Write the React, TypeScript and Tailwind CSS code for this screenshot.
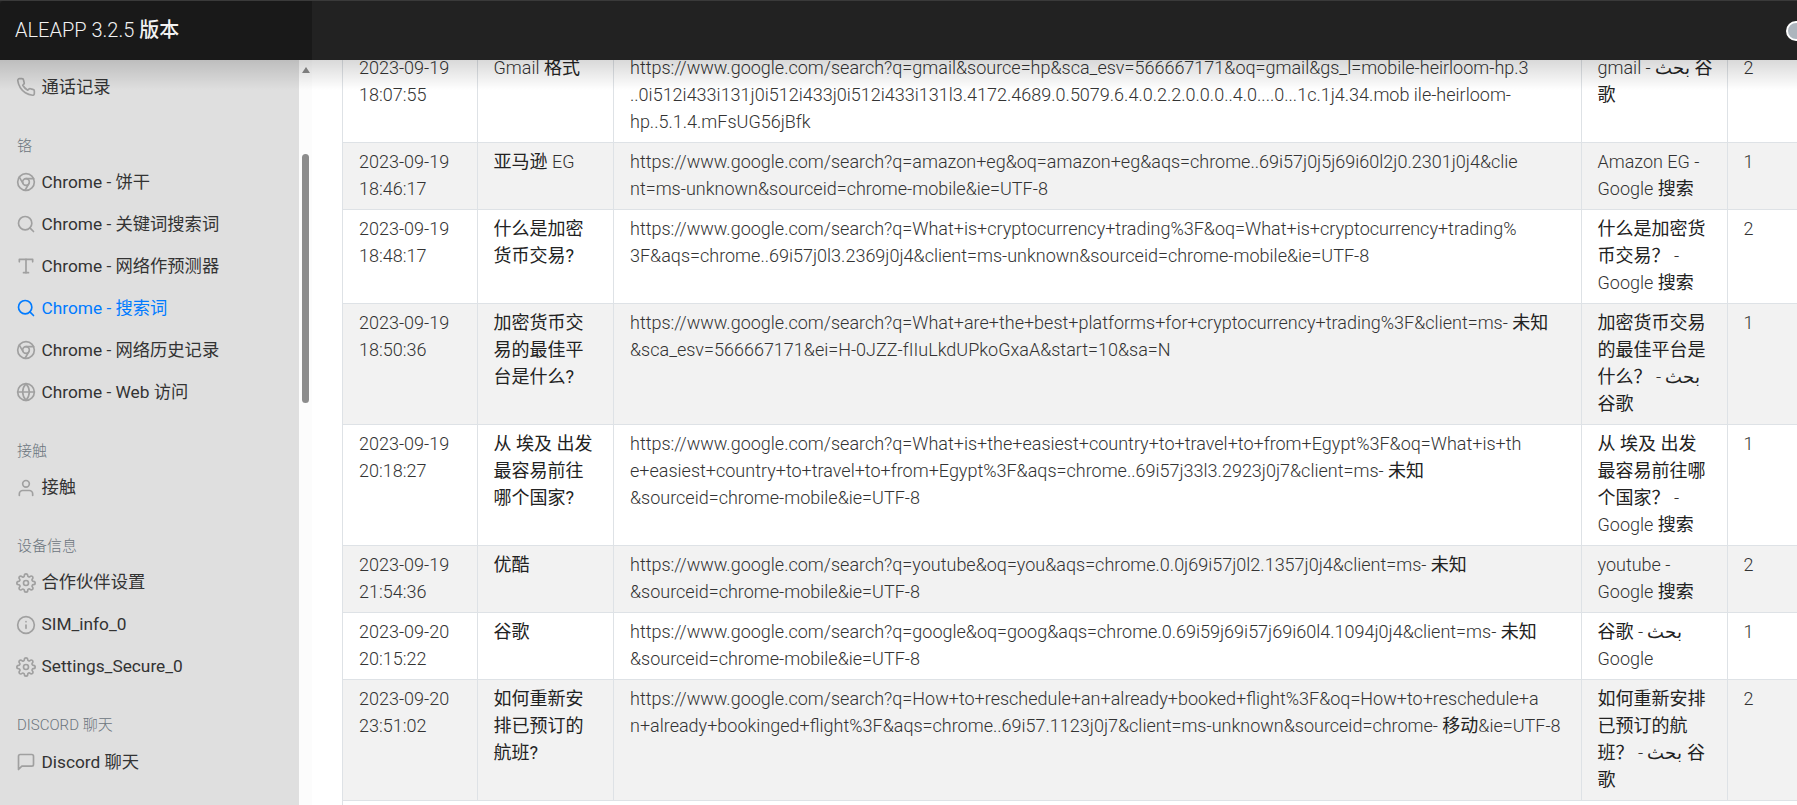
import type { ComponentType } from 'react';
import { FiChrome, FiGlobe, FiInfo, FiMessageSquare, FiPhone, FiSearch, FiSettings, FiType, FiUser } from 'react-icons/fi';

type NavItem = { label: string; icon: ComponentType<{ size?: number; className?: string }>; active?: boolean };
type NavGroup = { title?: string; items: NavItem[] };

const groups: NavGroup[] = [
  { items: [{ label: '通话记录', icon: FiPhone }] },
  {
    title: '铬',
    items: [
      { label: 'Chrome - 饼干', icon: FiChrome },
      { label: 'Chrome - 关键词搜索词', icon: FiSearch },
      { label: 'Chrome - 网络作预测器', icon: FiType },
      { label: 'Chrome - 搜索词', icon: FiSearch, active: true },
      { label: 'Chrome - 网络历史记录', icon: FiChrome },
      { label: 'Chrome - Web 访问', icon: FiGlobe },
    ],
  },
  { title: '接触', items: [{ label: '接触', icon: FiUser }] },
  {
    title: '设备信息',
    items: [
      { label: '合作伙伴设置', icon: FiSettings },
      { label: 'SIM_info_0', icon: FiInfo },
      { label: 'Settings_Secure_0', icon: FiSettings },
    ],
  },
  { title: 'DISCORD 聊天', items: [{ label: 'Discord 聊天', icon: FiMessageSquare }] },
];

const rows = [
  {
    time: ['2023-09-19', '18:07:55'],
    title: ['Gmail 格式'],
    url: [
      'https://www.google.com/search?q=gmail&source=hp&sca_esv=566667171&oq=gmail&gs_l=mobile-heirloom-hp.3',
      '..0i512i433i131j0i512i433j0i512i433i131l3.4172.4689.0.5079.6.4.0.2.2.0.0.0..4.0....0...1c.1j4.34.mob ile-heirloom-',
      'hp..5.1.4.mFsUG56jBfk',
    ],
    page: ['gmail - بحث 谷', '歌'],
    count: 2,
  },
  {
    time: ['2023-09-19', '18:46:17'],
    title: ['亚马逊 EG'],
    url: [
      'https://www.google.com/search?q=amazon+eg&oq=amazon+eg&aqs=chrome..69i57j0j5j69i60l2j0.2301j0j4&clie',
      'nt=ms-unknown&sourceid=chrome-mobile&ie=UTF-8',
    ],
    page: ['Amazon EG -', 'Google 搜索'],
    count: 1,
  },
  {
    time: ['2023-09-19', '18:48:17'],
    title: ['什么是加密', '货币交易?'],
    url: [
      'https://www.google.com/search?q=What+is+cryptocurrency+trading%3F&oq=What+is+cryptocurrency+trading%',
      '3F&aqs=chrome..69i57j0l3.2369j0j4&client=ms-unknown&sourceid=chrome-mobile&ie=UTF-8',
    ],
    page: ['什么是加密货', '币交易？ -', 'Google 搜索'],
    count: 2,
  },
  {
    time: ['2023-09-19', '18:50:36'],
    title: ['加密货币交', '易的最佳平', '台是什么?'],
    url: [
      'https://www.google.com/search?q=What+are+the+best+platforms+for+cryptocurrency+trading%3F&client=ms- 未知',
      '&sca_esv=566667171&ei=H-0JZZ-fIIuLkdUPkoGxaA&start=10&sa=N',
    ],
    page: ['加密货币交易', '的最佳平台是', '什么？ - بحث', '谷歌'],
    count: 1,
  },
  {
    time: ['2023-09-19', '20:18:27'],
    title: ['从 埃及 出发', '最容易前往', '哪个国家?'],
    url: [
      'https://www.google.com/search?q=What+is+the+easiest+country+to+travel+to+from+Egypt%3F&oq=What+is+th',
      'e+easiest+country+to+travel+to+from+Egypt%3F&aqs=chrome..69i57j33l3.2923j0j7&client=ms- 未知',
      '&sourceid=chrome-mobile&ie=UTF-8',
    ],
    page: ['从 埃及 出发', '最容易前往哪', '个国家？ -', 'Google 搜索'],
    count: 1,
  },
  {
    time: ['2023-09-19', '21:54:36'],
    title: ['优酷'],
    url: [
      'https://www.google.com/search?q=youtube&oq=you&aqs=chrome.0.0j69i57j0l2.1357j0j4&client=ms- 未知',
      '&sourceid=chrome-mobile&ie=UTF-8',
    ],
    page: ['youtube -', 'Google 搜索'],
    count: 2,
  },
  {
    time: ['2023-09-20', '20:15:22'],
    title: ['谷歌'],
    url: [
      'https://www.google.com/search?q=google&oq=goog&aqs=chrome.0.69i59j69i57j69i60l4.1094j0j4&client=ms- 未知',
      '&sourceid=chrome-mobile&ie=UTF-8',
    ],
    page: ['谷歌 - بحث', 'Google'],
    count: 1,
  },
  {
    time: ['2023-09-20', '23:51:02'],
    title: ['如何重新安', '排已预订的', '航班?'],
    url: [
      'https://www.google.com/search?q=How+to+reschedule+an+already+booked+flight%3F&oq=How+to+reschedule+a',
      'n+already+bookinged+flight%3F&aqs=chrome..69i57.1123j0j7&client=ms-unknown&sourceid=chrome- 移动&ie=UTF-8',
    ],
    page: ['如何重新安排', '已预订的航', '班？ - بحث 谷', '歌'],
    count: 2,
  },
];

// CJK and Arabic runs come out darker than the Roboto Light around them
function Mixed({ text }: { text: string }) {
  const parts = text.split(/([\u0600-\u06ff\u4e00-\u9fff？]+(?:\s[\u0600-\u06ff\u4e00-\u9fff？]+)*\??)/);
  return (
    <>
      {parts.map((part, i) =>
        i % 2 === 1 ? (
          <span key={i} className="font-normal text-[#222]">
            {part}
          </span>
        ) : (
          part
        ),
      )}
    </>
  );
}

// fixed line height: mixed fonts on one line would otherwise grow the row
function Lines({ lines }: { lines: string[] }) {
  return (
    <>
      {lines.map((line, i) => (
        <div key={i} className="h-[27px] whitespace-nowrap">
          <Mixed text={line} />
        </div>
      ))}
    </>
  );
}

function Sidebar() {
  return (
    <aside className="flex w-[312px] shrink-0 overflow-hidden">
      <nav className="w-[299px] shrink-0 bg-[#dfdfdf] pl-[16px] pt-[6px]">
        {groups.map((group, i) => (
          <div key={i} className={group.title ? 'mt-[22.75px]' : ''}>
            {group.title && <div className="ml-[1px] flex h-[30.5px] items-center text-[15px] font-light text-[#6c757d]">{group.title}</div>}
            {group.items.map((item) => {
              const Icon = item.icon;
              return (
                <div
                  key={item.label}
                  className={`flex h-[42px] items-center gap-[5.5px] text-[17.3px] ${item.active ? 'text-[#007bff]' : 'text-[#333]'}`}
                >
                  <Icon size={20} className={item.active ? 'text-[#007bff]' : 'text-[#a0a0a0]'} />
                  <span>{item.label}</span>
                </div>
              );
            })}
          </div>
        ))}
      </nav>
      {/* scrollbar */}
      <div className="flex w-[13px] flex-col items-center bg-[#fcfcfc] pt-[7px]">
        <div className="h-0 w-0 border-x-[4.5px] border-b-[6px] border-x-transparent border-b-[#8a8a8a]" />
        <div className="mt-[81px] h-[249px] w-[7px] rounded-full bg-[#8c8c8c]" />
      </div>
    </aside>
  );
}

export default function App() {
  return (
    <div className="flex h-screen flex-col overflow-hidden bg-white font-['Roboto','Noto_Sans_CJK_SC',sans-serif] text-[18px] leading-[27px]">
      <header className="relative z-10 flex h-[60px] shrink-0 items-stretch border-t border-[#3a3a3a] bg-[#222]">
        <div className="flex w-[312px] items-center rounded-tl-[4px] bg-[#191919] pl-[15px] text-[20px] font-light text-[#f2f2f2]">
          <span>
            ALEAPP 3.2.5 <span className="font-medium">版本</span>
          </span>
        </div>
        <div className="flex flex-1 items-center justify-end">
          <div className="-mr-[9px] h-[20px] w-[20px] rounded-full border-2 border-white bg-[#adb5bd]" />
        </div>
      </header>

      <div className="relative flex min-h-0 flex-1">
        <Sidebar />
        <main className="min-w-0 flex-1 overflow-hidden pl-[30px]">
          <table className="-mt-[12px] w-[1500px] table-fixed border-collapse font-light text-[#333]">
            <colgroup>
              <col className="w-[134.5px]" />
              <col className="w-[136.5px]" />
              <col className="w-[967.5px]" />
              <col className="w-[146px]" />
              <col className="w-[115.5px]" />
            </colgroup>
            <tbody>
              {rows.map((row, i) => (
                <tr key={i} className={i % 2 === 1 ? 'bg-[#f2f2f2]' : ''}>
                  <td className="border border-[#dee2e6] px-[16px] pb-[7px] pt-[5px] align-top">
                    <Lines lines={row.time} />
                  </td>
                  <td className="border border-[#dee2e6] px-[16px] pb-[7px] pt-[5px] align-top">
                    <Lines lines={row.title} />
                  </td>
                  <td className="border border-[#dee2e6] px-[16px] pb-[7px] pt-[5px] align-top">
                    <Lines lines={row.url} />
                  </td>
                  <td className="border border-[#dee2e6] px-[16px] pb-[7px] pt-[5px] align-top">
                    <Lines lines={row.page} />
                  </td>
                  <td className="border border-[#dee2e6] px-[16px] pb-[7px] pt-[5px] align-top">{row.count}</td>
                </tr>
              ))}
              <tr>
                <td colSpan={5} className="h-[40px] border border-[#dee2e6]" />
              </tr>
            </tbody>
          </table>
        </main>
        {/* drop shadow under the header */}
        <div className="pointer-events-none absolute inset-x-0 top-0 h-[30px] bg-gradient-to-b from-black/15 to-transparent" />
      </div>
    </div>
  );
}
